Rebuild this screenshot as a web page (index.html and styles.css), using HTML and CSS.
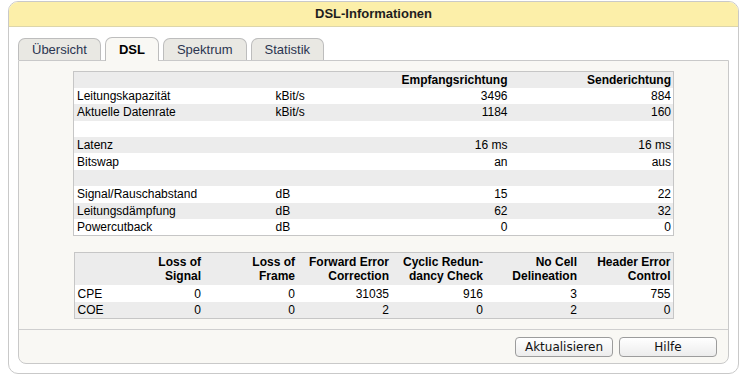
FILE: index.html
```html
<!DOCTYPE html>
<html lang="de">
<head>
    <meta charset="UTF-8">
    <title>DSL-Informationen</title>
    <link rel="stylesheet" href="styles.css">
</head>
<body>
    <div class="window">
        <div class="titlebar">DSL-Informationen</div>
        <div class="content">
            <!-- Tabs -->
            <div class="tabs">
                <div class="tab">Übersicht</div>
                <div class="tab active">DSL</div>
                <div class="tab">Spektrum</div>
                <div class="tab">Statistik</div>
            </div>

            <div class="panel">
                <table class="info-table">
                    <colgroup>
                        <col class="c-label">
                        <col class="c-unit">
                        <col class="c-recv">
                        <col class="c-send">
                    </colgroup>
                    <tr class="head">
                        <td></td><td></td>
                        <td class="num">Empfangsrichtung</td>
                        <td class="num">Senderichtung</td>
                    </tr>
                    <tr><td>Leitungskapazität</td><td>kBit/s</td><td class="num">3496</td><td class="num">884</td></tr>
                    <tr><td>Aktuelle Datenrate</td><td>kBit/s</td><td class="num">1184</td><td class="num">160</td></tr>
                    <tr><td></td><td></td><td></td><td></td></tr>
                    <tr><td>Latenz</td><td></td><td class="num">16 ms</td><td class="num">16 ms</td></tr>
                    <tr><td>Bitswap</td><td></td><td class="num">an</td><td class="num">aus</td></tr>
                    <tr><td></td><td></td><td></td><td></td></tr>
                    <tr><td>Signal/Rauschabstand</td><td>dB</td><td class="num">15</td><td class="num">22</td></tr>
                    <tr><td>Leitungsdämpfung</td><td>dB</td><td class="num">62</td><td class="num">32</td></tr>
                    <tr><td>Powercutback</td><td>dB</td><td class="num">0</td><td class="num">0</td></tr>
                </table>

                <table class="err-table">
                    <colgroup>
                        <col class="e-label">
                        <col><col><col><col><col><col>
                    </colgroup>
                    <tr class="head">
                        <td></td>
                        <td class="num">Loss of<br>Signal</td>
                        <td class="num">Loss of<br>Frame</td>
                        <td class="num">Forward Error<br>Correction</td>
                        <td class="num">Cyclic Redun-<br>dancy Check</td>
                        <td class="num">No Cell<br>Delineation</td>
                        <td class="num">Header Error<br>Control</td>
                    </tr>
                    <tr><td>CPE</td><td class="num">0</td><td class="num">0</td><td class="num">31035</td><td class="num">916</td><td class="num">3</td><td class="num">755</td></tr>
                    <tr><td>COE</td><td class="num">0</td><td class="num">0</td><td class="num">2</td><td class="num">0</td><td class="num">2</td><td class="num">0</td></tr>
                </table>

                <div class="buttons">
                    <button class="btn btn-refresh">Aktualisieren</button>
                    <button class="btn btn-help">Hilfe</button>
                </div>
            </div>
        </div>
    </div>
</body>
</html>
```

FILE: styles.css
```css
body {
    margin: 0;
    background-color: #fff;
    font-family: "Liberation Sans", Arial, sans-serif;
    font-size: 12px;
    color: #000;
}
.window {
    box-sizing: border-box;
    width: 731px;
    height: 373px;
    margin: 1px 0 0 8px;
    border: 1px solid #c9c9c9;
    border-radius: 10px;
    overflow: hidden;
    background-color: #fff;
}
.titlebar {
    height: 24px;
    line-height: 24px;
    text-align: center;
    font-size: 13px;
    font-weight: bold;
    color: #1e1e1e;
    background-color: #fcefa9;
    border-bottom: 1px solid #ddd6aa;
}
.content {
    padding: 11px 9px 0 9px;
}

/* Tabs */
.tabs {
    display: flex;
    align-items: flex-end;
    height: 22px;
    gap: 4px;
}
.tab {
    box-sizing: border-box;
    height: 22px;
    padding: 0 13px;
    line-height: 21px;
    font-size: 13px;
    color: #2b3550;
    background-color: #e9e8e3;
    border: 1px solid #bdbdbd;
    border-bottom: none;
    border-radius: 7px 7px 0 0;
}
.tab.active {
    height: 24px;
    line-height: 24px;
    font-weight: bold;
    color: #000;
    background-color: #f9f8f4;
    position: relative;
    top: 1px;
    z-index: 1;
}
.panel {
    box-sizing: border-box;
    height: 304px;
    padding-top: 10px;
    background-color: #f9f8f4;
    border: 1px solid #c9c9c9;
    border-radius: 0 0 8px 8px;
}

/* Tables */
table {
    border-collapse: collapse;
    table-layout: fixed;
    width: 600px;
    margin: 0 auto;
    border: 1px solid #c6c6c6;
}
td {
    padding: 0 2px 0 3px;
    white-space: nowrap;
    overflow: hidden;
}
td.num {
    text-align: right;
}
.info-table tr {
    height: 16.4px;
}
.info-table tr:nth-child(odd) {
    background-color: #ececec;
}
.info-table tr:nth-child(even) {
    background-color: #fff;
}
.head td {
    font-weight: bold;
}
.c-label { width: 199px; }
.c-unit { width: 90px; }
.c-recv { width: 147px; }
.c-send { width: 164px; }

.err-table {
    margin-top: 16px;
}
.err-table tr {
    height: 16.5px;
    background-color: #fff;
}
.err-table tr.head,
.err-table tr:nth-child(3) {
    background-color: #ececec;
}
.err-table tr.head td {
    height: 33px;
    line-height: 14px;
    vertical-align: top;
    padding-top: 2px;
    box-sizing: border-box;
}
.e-label { width: 35px; }

/* Buttons */
.buttons {
    margin-top: 10px;
    border-top: 1px solid #cfcfcf;
    display: flex;
    justify-content: flex-end;
    gap: 6px;
    padding: 7px 11px 0 0;
}
.btn {
    box-sizing: border-box;
    height: 20px;
    padding: 0;
    font-family: "DejaVu Sans", sans-serif;
    font-size: 12px;
    color: #111;
    background: linear-gradient(#ffffff, #ececec);
    border: 1px solid #9c9c9c;
    border-radius: 4px;
}
.btn-refresh { width: 98px; }
.btn-help { width: 98px; }
```
